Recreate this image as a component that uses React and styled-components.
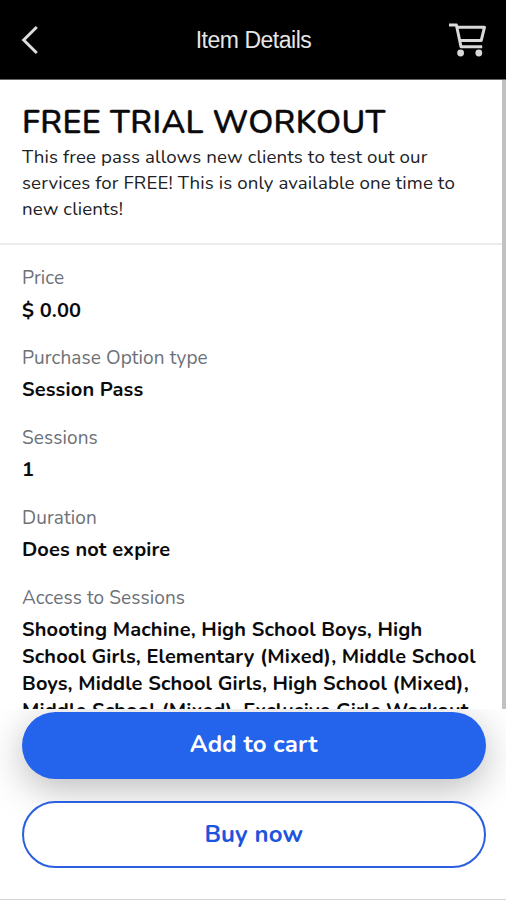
import React from 'react';
import styled, { createGlobalStyle } from 'styled-components';

const GlobalStyle = createGlobalStyle`
  * { box-sizing: border-box; }
  body { margin: 0; background: #fff; overflow: hidden; }
  button { margin: 0; padding: 0; border: 0; background: none; font: inherit; color: inherit; }
`;

const Screen = styled.div`
  display: flex;
  flex-direction: column;
  width: 506px;
  height: 900px;
  overflow: hidden;
  background: #fff;
  color: #0b0b0d;
  font-family: Nunito, Lato, "Noto Sans", sans-serif;
`;

const Header = styled.header`
  display: grid;
  grid-template-columns: 60px 1fr 60px;
  align-items: center;
  flex: none;
  height: 80px;
  background: #000;
  border-bottom: 1px solid #666;
`;

const HeaderTitle = styled.h1`
  margin: 0;
  padding-left: 1px;
  text-align: center;
  font: 400 23px/28px "Liberation Sans", Arial, sans-serif;
  letter-spacing: -0.48px;
  color: #e6e6e6;
`;

const IconButton = styled.button`
  display: flex;
  justify-content: ${(p) => (p.$end ? 'flex-end' : 'flex-start')};
  padding: ${(p) => (p.$end ? '0 19px 0 0' : '0 0 0 20px')};
`;

const Content = styled.main`
  flex: none;
  height: 629px;
  overflow: hidden;
  border-right: 4px solid #c1c1c1;
`;

const Summary = styled.section`
  padding: 22.5px 22px 20.3px;
  border-bottom: 2px solid #eaebeb;
`;

const ItemName = styled.h2`
  margin: 0 0 3.5px;
  font-size: 32.4px;
  font-weight: 600;
  line-height: 39px;
  letter-spacing: 0.3px;
  -webkit-text-stroke: 0.3px currentColor;
`;

const Description = styled.p`
  margin: 0;
  font-size: 18.7px;
  line-height: 25.9px;
  letter-spacing: 0.1px;
  color: #202124;
`;

const Details = styled.dl`
  display: flex;
  flex-direction: column;
  gap: 21.7px;
  margin: 0;
  padding: 20.4px 20px 0 22px;
`;

const Label = styled.dt`
  margin-bottom: 5.1px;
  font-size: 19px;
  line-height: 26px;
  letter-spacing: 0.1px;
  color: #6c7178;
`;

const Value = styled.dd`
  margin: 0;
  font-size: 20px;
  font-weight: 700;
  line-height: 27px;
  letter-spacing: 0.13px;
`;

const Line = styled.span`
  display: block;
  white-space: nowrap;
`;

const Actions = styled.footer`
  display: flex;
  flex-direction: column;
  gap: 22px;
  flex: 1;
  padding: 2.5px 20px 0 21.5px;
  overflow: hidden;
  background: #fff;
  border-bottom: 1.5px solid #d4d4d4;
`;

const ActionButton = styled.button`
  flex: none;
  height: 67.5px;
  border-radius: 34px;
  font-size: 24px;
  font-weight: 700;
  line-height: 32px;
  letter-spacing: 0.15px;
`;

const PrimaryButton = styled(ActionButton)`
  padding-bottom: 2px;
  background: #2463eb;
  color: #fff;
  box-shadow: 0 10px 38px rgba(0, 0, 0, 0.27);
`;

const OutlineButton = styled(ActionButton)`
  z-index: 1;
  height: 66.5px;
  padding-bottom: 1px;
  border: 2px solid #2a5fe0;
  background: #fff;
  color: #1d55dd;
`;

const details = [
  ['Price', ['$ 0.00']],
  ['Purchase Option type', ['Session Pass']],
  ['Sessions', ['1']],
  ['Duration', ['Does not expire']],
  [
    'Access to Sessions',
    [
      'Shooting Machine, High School Boys, High',
      'School Girls, Elementary (Mixed), Middle School',
      'Boys, Middle School Girls, High School (Mixed),',
      'Middle School (Mixed), Exclusive Girls Workout,',
    ],
  ],
];

const BackIcon = () => (
  <svg width="20" height="32" viewBox="0 0 20 32" fill="none" stroke="#dcdcdc" strokeWidth="3">
    <path d="M16.8 3 3.7 16 16.8 29" />
  </svg>
);

const CartIcon = () => (
  <svg width="40" height="38" viewBox="0 0 40 38" fill="none" stroke="#d9d9d9" strokeWidth="3" strokeLinejoin="round">
    <path d="M2 4H9.4L14 25.7H35.2M9.8 6.2H37.5L34.2 19.6H12.8" />
    <circle cx="13.6" cy="32" r="3.4" fill="#d9d9d9" stroke="none" />
    <circle cx="31.8" cy="32" r="3.4" fill="#d9d9d9" stroke="none" />
  </svg>
);

export default function App() {
  return (
    <Screen>
      <GlobalStyle />
      <Header>
        <IconButton aria-label="Back"><BackIcon /></IconButton>
        <HeaderTitle>Item Details</HeaderTitle>
        <IconButton $end aria-label="Cart"><CartIcon /></IconButton>
      </Header>
      <Content>
        <Summary>
          <ItemName>FREE TRIAL WORKOUT</ItemName>
          <Description>
            <Line>This free pass allows new clients to test out our</Line>
            <Line>services for FREE! This is only available one time to</Line>
            <Line>new clients!</Line>
          </Description>
        </Summary>
        <Details>
          {details.map(([label, lines]) => (
            <div key={label}>
              <Label>{label}</Label>
              <Value>
                {lines.map((line) => <Line key={line}>{line}</Line>)}
              </Value>
            </div>
          ))}
        </Details>
      </Content>
      <Actions>
        <PrimaryButton>Add to cart</PrimaryButton>
        <OutlineButton>Buy now</OutlineButton>
      </Actions>
    </Screen>
  );
}
